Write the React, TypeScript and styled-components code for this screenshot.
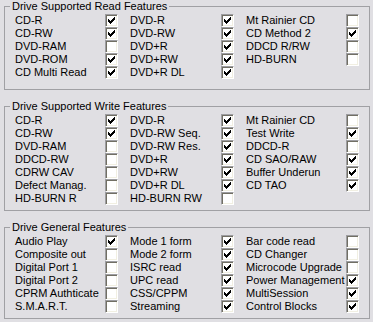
import React from "react";
import styled, { createGlobalStyle } from "styled-components";

const Global = createGlobalStyle`
  html, body { margin: 0; padding: 0; background: #e0dfe3; }
  body { font-family: "Liberation Sans", Arial, sans-serif; font-size: 11px; color: #000; }
`;

const Page = styled.div`
  width: 373px;
  height: 322px;
  box-sizing: border-box;
  padding-left: 4px;
  background: #e0dfe3;
  display: flex;
  flex-direction: column;
  align-items: flex-start;
`;

const Group = styled.fieldset<{ $mt: number }>`
  margin: ${(p) => p.$mt}px 0 0 0;
  padding: 0;
  width: 366px;
  min-width: 0;
  box-sizing: border-box;
  border: 1px solid #a0a0a4;
`;

const Legend = styled.legend`
  margin-left: 5px;
  padding: 0 2px;
  line-height: 13px;
  font-size: 11px;
  color: #000;
`;

const Grid = styled.div<{ $pb: number }>`
  display: grid;
  grid-template-columns: 90px 13px 103px 13px 112px 13px;
  grid-auto-rows: 13px;
  padding: 1px 0 ${(p) => p.$pb}px 10px;
`;

const Label = styled.span<{ $indent: boolean }>`
  display: block;
  line-height: 13px;
  white-space: nowrap;
  padding-left: ${(p) => (p.$indent ? 12 : 0)}px;
`;

const Box = styled.span`
  display: block;
  width: 13px;
  height: 13px;
  box-sizing: border-box;
  border-top: 1px solid #9d9da1;
  border-left: 1px solid #9d9da1;
  border-right: 1px solid #ffffff;
  border-bottom: 1px solid #ffffff;
  box-shadow: inset 1px 1px 0 #716f64, inset -1px -1px 0 #f1efe2;
  background: #ffffff;
`;

const Tick = styled.svg`
  display: block;
  margin: 2px 0 0 2px;
`;

const CHECK_PIXELS: [number, number, number][] = [
  [6, 0, 1],
  [5, 1, 2],
  [0, 2, 1],
  [4, 2, 3],
  [0, 3, 2],
  [3, 3, 3],
  [0, 4, 5],
  [1, 5, 3],
  [2, 6, 1],
];

function CheckBox({ checked }: { checked: boolean }) {
  return (
    <Box>
      {checked && (
        <Tick width="7" height="7" viewBox="0 0 7 7" shapeRendering="crispEdges">
          {CHECK_PIXELS.map(([x, y, w], i) => (
            <rect key={i} x={x} y={y} width={w} height={1} fill="#000" />
          ))}
        </Tick>
      )}
    </Box>
  );
}

type Item = [string, boolean];

interface GroupData {
  title: string;
  mt: number;
  pb: number;
  columns: Item[][];
}

const groups: GroupData[] = [
  {
    title: "Drive Supported Read Features",
    mt: 0,
    pb: 10,
    columns: [
      [["CD-R", true], ["CD-RW", true], ["DVD-RAM", false], ["DVD-ROM", true], ["CD Multi Read", true]],
      [["DVD-R", true], ["DVD-RW", true], ["DVD+R", true], ["DVD+RW", true], ["DVD+R DL", true]],
      [["Mt Rainier CD", false], ["CD Method 2", true], ["DDCD R/RW", false], ["HD-BURN", false]],
    ],
  },
  {
    title: "Drive Supported Write Features",
    mt: 10,
    pb: 5,
    columns: [
      [["CD-R", true], ["CD-RW", true], ["DVD-RAM", false], ["DDCD-RW", false], ["CDRW CAV", false], ["Defect Manag.", false], ["HD-BURN R", false]],
      [["DVD-R", true], ["DVD-RW Seq.", true], ["DVD-RW Res.", true], ["DVD+R", true], ["DVD+RW", true], ["DVD+R DL", true], ["HD-BURN RW", false]],
      [["Mt Rainier CD", false], ["Test Write", true], ["DDCD-R", false], ["CD SAO/RAW", true], ["Buffer Underun", true], ["CD TAO", true]],
    ],
  },
  {
    title: "Drive General Features",
    mt: 10,
    pb: 5,
    columns: [
      [["Audio Play", true], ["Composite out", false], ["Digital Port 1", false], ["Digital Port 2", false], ["CPRM Authticate", false], ["S.M.A.R.T.", false]],
      [["Mode 1 form", true], ["Mode 2 form", true], ["ISRC read", true], ["UPC read", true], ["CSS/CPPM", true], ["Streaming", true]],
      [["Bar code read", false], ["CD Changer", false], ["Microcode Upgrade", false], ["Power Management", true], ["MultiSession", true], ["Control Blocks", true]],
    ],
  },
];

function FeatureGroup({ data }: { data: GroupData }) {
  const rows = Math.max(...data.columns.map((c) => c.length));
  const cells: React.ReactNode[] = [];
  for (let r = 0; r < rows; r++) {
    data.columns.forEach((col, c) => {
      const item = col[r];
      if (item) {
        cells.push(
          <Label key={`l${r}-${c}`} $indent={c > 0}>
            {item[0]}
          </Label>
        );
        cells.push(<CheckBox key={`b${r}-${c}`} checked={item[1]} />);
      } else {
        cells.push(<span key={`l${r}-${c}`} />);
        cells.push(<span key={`b${r}-${c}`} />);
      }
    });
  }
  return (
    <Group $mt={data.mt}>
      <Legend>{data.title}</Legend>
      <Grid $pb={data.pb}>{cells}</Grid>
    </Group>
  );
}

export default function App() {
  return (
    <>
      <Global />
      <Page>
        {groups.map((g) => (
          <FeatureGroup key={g.title} data={g} />
        ))}
      </Page>
    </>
  );
}
